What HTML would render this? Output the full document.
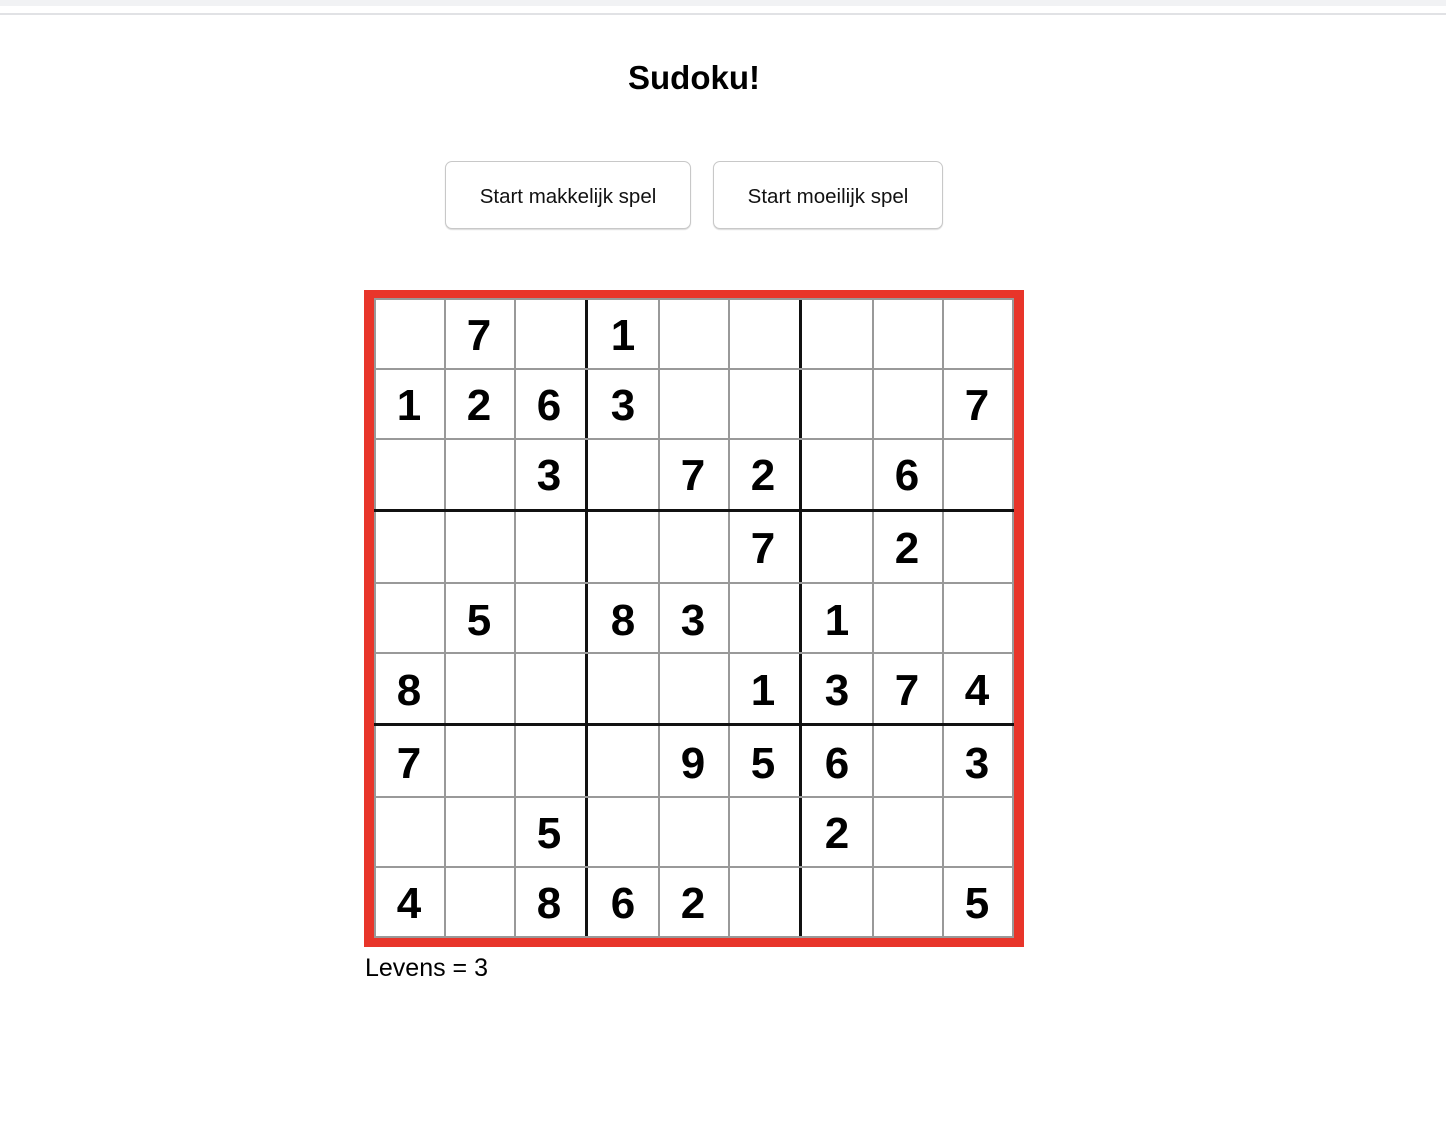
<!DOCTYPE html>
<html><head><meta charset="utf-8">
<style>
html,body{margin:0;padding:0;background:#fff;width:1446px;height:1136px;overflow:hidden;position:relative;font-family:"Liberation Sans",sans-serif;}
.abs{position:absolute;}
.btn{position:absolute;top:161px;height:68px;padding-top:4px;border:1px solid #c8c8c8;border-radius:7px;background:#fff;box-shadow:0 1px 1px rgba(0,0,0,0.15);font-size:20.5px;color:#111;display:flex;align-items:center;justify-content:center;box-sizing:border-box;}
.v{position:absolute;top:298px;height:640px;}
.h{position:absolute;left:374px;width:640px;}
.g{background:#999;}
.k{background:#111;}
.d{position:absolute;width:60px;height:60px;margin-left:-30px;margin-top:-29px;text-align:center;line-height:60px;font-size:44px;font-weight:bold;color:#000;}
</style></head><body>
<div class="abs" style="left:0;top:0;width:1446px;height:6px;background:#f1f2f4"></div>
<div class="abs" style="left:0;top:13px;width:1446px;height:2px;background:#e1e2e5"></div>
<div class="abs" style="left:0;top:58px;width:1388px;text-align:center;font-size:33px;font-weight:bold;line-height:40px;">Sudoku!</div>
<div class="btn" style="left:445px;width:246px;">Start makkelijk spel</div>
<div class="btn" style="left:713px;width:230px;">Start moeilijk spel</div>

<div class="abs" style="left:364px;top:290px;width:660px;height:657px;background:#e8352a"></div>
<div class="abs" style="left:374px;top:298px;width:640px;height:640px;background:#fff"></div>

<div class="v g" style="left:374px;width:2px"></div>
<div class="v g" style="left:444px;width:2px"></div>
<div class="v g" style="left:514px;width:2px"></div>
<div class="v k" style="left:585px;width:3px"></div>
<div class="v g" style="left:658px;width:2px"></div>
<div class="v g" style="left:728px;width:2px"></div>
<div class="v k" style="left:799px;width:3px"></div>
<div class="v g" style="left:872px;width:2px"></div>
<div class="v g" style="left:942px;width:2px"></div>
<div class="v g" style="left:1012px;width:2px"></div>

<div class="h g" style="top:298px;height:2px"></div>
<div class="h g" style="top:368px;height:2px"></div>
<div class="h g" style="top:438px;height:2px"></div>
<div class="h k" style="top:509px;height:3px"></div>
<div class="h g" style="top:582px;height:2px"></div>
<div class="h g" style="top:652px;height:2px"></div>
<div class="h k" style="top:723px;height:3px"></div>
<div class="h g" style="top:796px;height:2px"></div>
<div class="h g" style="top:866px;height:2px"></div>
<div class="h g" style="top:936px;height:2px"></div>

<div class="d" style="left:479px;top:335px">7</div>
<div class="d" style="left:623px;top:335px">1</div>
<div class="d" style="left:409px;top:405px">1</div>
<div class="d" style="left:479px;top:405px">2</div>
<div class="d" style="left:549px;top:405px">6</div>
<div class="d" style="left:623px;top:405px">3</div>
<div class="d" style="left:977px;top:405px">7</div>
<div class="d" style="left:549px;top:475px">3</div>
<div class="d" style="left:693px;top:475px">7</div>
<div class="d" style="left:763px;top:475px">2</div>
<div class="d" style="left:907px;top:475px">6</div>
<div class="d" style="left:763px;top:548px">7</div>
<div class="d" style="left:907px;top:548px">2</div>
<div class="d" style="left:479px;top:620px">5</div>
<div class="d" style="left:623px;top:620px">8</div>
<div class="d" style="left:693px;top:620px">3</div>
<div class="d" style="left:837px;top:620px">1</div>
<div class="d" style="left:409px;top:690px">8</div>
<div class="d" style="left:763px;top:690px">1</div>
<div class="d" style="left:837px;top:690px">3</div>
<div class="d" style="left:907px;top:690px">7</div>
<div class="d" style="left:977px;top:690px">4</div>
<div class="d" style="left:409px;top:763px">7</div>
<div class="d" style="left:693px;top:763px">9</div>
<div class="d" style="left:763px;top:763px">5</div>
<div class="d" style="left:837px;top:763px">6</div>
<div class="d" style="left:977px;top:763px">3</div>
<div class="d" style="left:549px;top:833px">5</div>
<div class="d" style="left:837px;top:833px">2</div>
<div class="d" style="left:409px;top:903px">4</div>
<div class="d" style="left:549px;top:903px">8</div>
<div class="d" style="left:623px;top:903px">6</div>
<div class="d" style="left:693px;top:903px">2</div>
<div class="d" style="left:977px;top:903px">5</div>

<div class="abs" style="left:365px;top:953px;font-size:25px;line-height:30px;color:#000">Levens = 3</div>
</body></html>
